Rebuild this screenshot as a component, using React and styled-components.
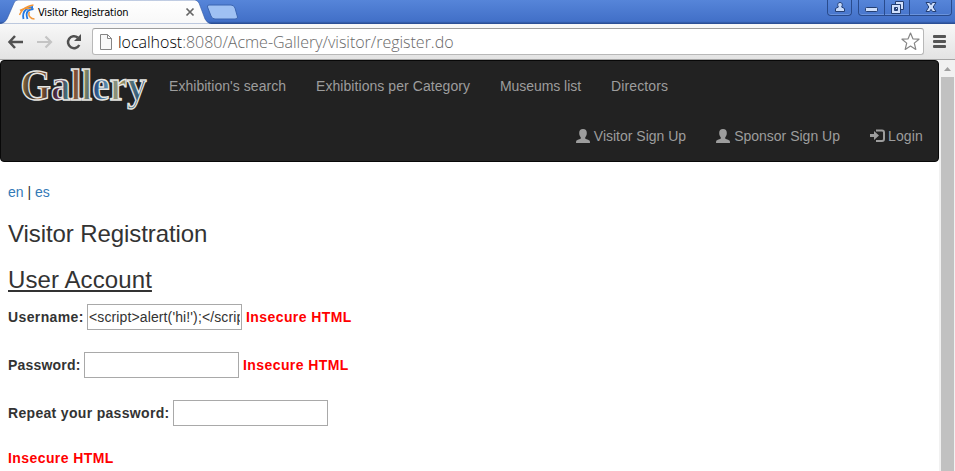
import React from "react";
import styled, { createGlobalStyle } from "styled-components";

const GlobalStyle = createGlobalStyle`
  * { box-sizing: border-box; }
  html, body { margin: 0; height: 100%; overflow: hidden; background: #fff; }
`;

const Window = styled.div`
  width: 955px;
  height: 471px;
  display: flex;
  flex-direction: column;
  overflow: hidden;
  font-family: "Liberation Sans", Arial, sans-serif;
  font-size: 14px;
  line-height: 20px;
  color: #333;
`;

const TitleBar = styled.header`
  height: 24px;
  flex: none;
  display: flex;
  align-items: flex-start;
  background: linear-gradient(#5685d9 0, #4270c8 21px, #3c69bd 22px, #2b4f96 23px, #2b4f96 24px);
`;

const Tab = styled.div`
  position: relative;
  width: 209px;
  height: 24px;
  display: flex;
  align-items: center;
  padding: 0 14px 0 19px;
`;

const TabShape = styled.svg`
  position: absolute;
  left: 0;
  top: 0;
`;

const Favicon = styled.svg`
  position: relative;
  flex: none;
`;

const TabTitle = styled.span`
  position: relative;
  flex: 1;
  margin: 1px 0 0 3px;
  font: 11px/16px "DejaVu Sans Condensed", "DejaVu Sans", sans-serif;
  letter-spacing: -0.18px;
  color: #000;
  white-space: nowrap;
`;

const TabClose = styled.svg`
  position: relative;
  flex: none;
`;

const NewTab = styled.svg`
  margin: 4px 0 0 -3px;
`;

const Controls = styled.div`
  display: flex;
  gap: 6px;
  margin-left: auto;
  padding-right: 3px;
`;

const ControlGroup = styled.div`
  display: flex;
  height: 16px;
  border: 1px solid #294b8d;
  border-top: 0;
  border-radius: 0 0 4px 4px;
  box-shadow: inset 0 -1px #6a93dc;
`;

const ControlButton = styled.div`
  width: ${(p) => p.$width}px;
  height: 15px;
  display: flex;
  justify-content: center;
  & + & { border-left: 1px solid #294b8d; }
`;

const Toolbar = styled.div`
  height: 36px;
  flex: none;
  display: flex;
  align-items: center;
  padding: 0 8px 0 7px;
  background: linear-gradient(#f8f8f8, #e3e3e3);
  border-bottom: 1px solid #a5a5a5;
`;

const NavIcons = styled.div`
  display: flex;
  gap: 11px;
  width: 85px;
`;

const AddressBar = styled.div`
  width: 832px;
  height: 27px;
  display: flex;
  align-items: center;
  padding: 0 3px 0 7px;
  background: #fff;
  border: 1px solid #b8b8b8;
  border-top-color: #9d9d9d;
  border-radius: 3px;
`;

const Url = styled.span`
  flex: 1;
  margin-left: 6px;
  font: 300 16px/24px "Open Sans", "Noto Sans", sans-serif;
  letter-spacing: -0.02px;
  color: #686868;
  white-space: nowrap;
`;

const UrlHost = styled.span`
  color: #000;
`;

const MenuIcon = styled.svg`
  margin-left: auto;
`;

const Viewport = styled.div`
  flex: 1;
  display: flex;
  min-height: 0;
`;

const Page = styled.main`
  flex: 1;
  min-width: 0;
  overflow: hidden;
`;

const Navbar = styled.nav`
  height: 102px;
  background: #222;
  border: 1px solid #080808;
  border-radius: 4px;
  color: #9d9d9d;
`;

const NavRow = styled.div`
  height: 50px;
  display: flex;
  align-items: center;
  justify-content: ${(p) => (p.$end ? "flex-end" : "flex-start")};
  gap: 30px;
  padding: 0 15px 0 ${(p) => (p.$end ? 0 : 15)}px;
`;

const Logo = styled.svg`
  margin-right: -10px;
  overflow: visible;
`;

const NavLink = styled.a`
  display: flex;
  align-items: center;
  gap: ${(p) => p.$gap ?? 4}px;
  letter-spacing: ${(p) => p.$spacing || 0}px;
  white-space: nowrap;
`;

const Content = styled.div`
  padding: 20px 8px 0;
`;

const LanguageLink = styled.a`
  color: #337ab7;
`;

const Title = styled.h1`
  margin: ${(p) => (p.$underlined ? 20 : 19)}px 0 0;
  font-size: 24px;
  font-weight: 400;
  line-height: 26px;
  letter-spacing: ${(p) => p.$spacing || 0}px;
  text-decoration: ${(p) => (p.$underlined ? "underline" : "none")};
  text-underline-offset: 2px;
  text-decoration-thickness: 2px;
`;

const Field = styled.div`
  display: flex;
  align-items: center;
  gap: 4px;
  height: 26px;
  margin-bottom: 22px;
`;

const Label = styled.label`
  width: ${(p) => p.$width}px;
  font-weight: 700;
  letter-spacing: ${(p) => p.$spacing || 0}px;
  white-space: nowrap;
`;

const Form = styled.form`
  margin-top: 11px;
`;

const Input = styled.input`
  width: 155px;
  height: 26px;
  padding: 1px 1px;
  border: 1px solid #a9a9a9;
  border-radius: 0;
  outline: 0;
  background: #fff;
  color: #333;
  font: 14px/20px "Liberation Sans", Arial, sans-serif;
  letter-spacing: 0.12px;
`;

const ErrorText = styled.span`
  font-weight: 700;
  letter-spacing: 0.42px;
  color: #f00;
`;

const Scrollbar = styled.div`
  width: 16px;
  display: flex;
  flex-direction: column;
  align-items: center;
  padding-left: 1px;
  background: #f1f1f1;
`;

const ScrollArrow = styled.svg`
  flex: none;
`;

const ScrollThumb = styled.div`
  width: 13px;
  flex: 1;
  background: #c1c1c1;
`;

const UserIcon = () => (
  <svg width="14" height="14" viewBox="0 0 14 14" fill="#9d9d9d">
    <path d="M7 0C9.6 0 10.8 1.6 10.8 4C10.8 6 10.1 7.5 9.2 8.4V9.5C9.6 10.3 13.2 10.7 13.8 12.1L14 14H0L.2 12.1C.8 10.7 4.4 10.3 4.8 9.5V8.4C3.9 7.5 3.2 6 3.2 4C3.2 1.6 4.4 0 7 0Z" />
  </svg>
);

const LoginIcon = () => (
  <svg width="15" height="14" viewBox="0 0 15 14">
    <path d="M0 5H4V2L9 6.5L4 11V8H0Z" fill="#9d9d9d" />
    <path d="M6 1.5H12Q14 1.5 14 3.5V10Q14 12 12 12H6" fill="none" stroke="#9d9d9d" strokeWidth="2" />
  </svg>
);

const LINKS = [
  ["Exhibition's search", 0.04],
  ["Exhibitions per Category", 0.06],
  ["Museums list", -0.06],
  ["Directors", 0.12],
];

export default function App() {
  return (
    <Window>
      <GlobalStyle />
      <TitleBar>
        <Tab>
          <TabShape width="215" height="24">
            <defs>
              <linearGradient id="tab" x2="0" y2="1">
                <stop stopColor="#fff" />
                <stop offset="1" stopColor="#f8f8f8" />
              </linearGradient>
            </defs>
            <path d="M0 24Q5 23 7 19L14 3Q15 0 18 0H195Q197 0 199 3L205 19Q207 23 211 24Z" fill="url(#tab)" stroke="#3157a3" strokeWidth=".6" />
          </TabShape>
          <Favicon width="16" height="16" viewBox="0 0 16 16" fill="none">
            <path d="M4.5 15Q3 9 7 5.5Q10 3 14 3M8.5 15Q6.5 9.5 9 7Q11 5 14.5 5" stroke="#2478df" strokeWidth="1.8" />
            <path d="M.5 11Q3 5 8 3Q11 1.5 14.5 1M1 6.5Q6 3.5 12 4.5M10.5 8Q9 10.5 11 13Q12.5 15 15.5 15" stroke="#f39739" strokeWidth="1.5" />
          </Favicon>
          <TabTitle>Visitor Registration</TabTitle>
          <TabClose width="10" height="10" viewBox="0 0 10 10">
            <path d="M1.5 1.5L8.5 8.5M8.5 1.5L1.5 8.5" stroke="#666" strokeWidth="1.7" />
          </TabClose>
        </Tab>
        <NewTab width="33" height="16" viewBox="0 0 33 16">
          <path d="M3 1H25Q28 1 29 4L31.5 13Q32 15 29 15H9Q6 15 5 12L1.5 3Q1 1 3 1Z" fill="#9fc1f3" stroke="#3b65b1" />
        </NewTab>
        <Controls>
          <ControlGroup>
            <ControlButton $width={23}>
              <svg width="12" height="13" viewBox="0 0 12 13" fill="#c8dbfb" stroke="#243f73">
                <path d="M6 2.5C9 2.5 8.5 6 7.5 7L10.5 8.5V11.5H1.5V8.5L4.5 7C3.5 6 3 2.5 6 2.5Z" />
              </svg>
            </ControlButton>
          </ControlGroup>
          <ControlGroup>
            <ControlButton $width={25}>
              <svg width="13" height="14"><rect x=".5" y="7.5" width="12" height="4" rx="1" fill="#d0e0fc" stroke="#243f73" /></svg>
            </ControlButton>
            <ControlButton $width={25}>
              <svg width="13" height="14" viewBox="0 0 13 14" fill="#d0e0fc" stroke="#243f73">
                <path d="M4.5 1.5H12.5V9.5H4.5Z" />
                <path d="M.5 4.5H9.5V13.5H.5ZM3.5 7.5V10.5H6.5V7.5Z" fillRule="evenodd" />
              </svg>
            </ControlButton>
            <ControlButton $width={42}>
              <svg width="12" height="14" viewBox="0 0 12 14">
                <path d="M1 2.5H4.5L6 4.7L7.5 2.5H11L8.2 7L11 11.5H7.5L6 9.3L4.5 11.5H1L3.8 7Z" fill="#d0e0fc" stroke="#243f73" />
              </svg>
            </ControlButton>
          </ControlGroup>
        </Controls>
      </TitleBar>

      <Toolbar>
        <NavIcons>
          <svg width="18" height="18" viewBox="0 0 18 18" fill="none" stroke="#505050" strokeWidth="2.5"><path d="M16 9H3M8 3L2.5 9L8 15" /></svg>
          <svg width="18" height="18" viewBox="0 0 18 18" fill="none" stroke="#c4c4c4" strokeWidth="2.2"><path d="M1 9H15M9.5 3.5L15 9L9.5 14.5" /></svg>
          <svg width="18" height="18" viewBox="0 0 18 18"><path d="M14.3 12A6 6 0 1 1 12.8 4.5" fill="none" stroke="#505050" strokeWidth="2.5" /><path d="M16 1V8H9Z" fill="#505050" /></svg>
        </NavIcons>
        <AddressBar>
          <svg width="12" height="16" viewBox="0 0 12 16" fill="#f8f8f8" stroke="#858585"><path d="M.5.5H7.5L11.5 4.5V15.5H.5ZM7.5.5V4.5H11.5" /></svg>
          <Url><UrlHost>localhost</UrlHost>:8080/Acme-Gallery/visitor/register.do</Url>
          <svg width="19" height="19" viewBox="0 0 19 19"><path d="M9.5 1L11.9 6.8L18 7.2L13.3 11.1L14.8 17.4L9.5 14L4.2 17.4L5.7 11.1L1 7.2L7.1 6.8Z" fill="#fff" stroke="#858585" strokeWidth="1.2" strokeLinejoin="round" /></svg>
        </AddressBar>
        <MenuIcon width="14" height="14" fill="#555"><rect y="0" width="13" height="3" rx="1" /><rect y="5" width="13" height="3" rx="1" /><rect y="10" width="13" height="3" rx="1" /></MenuIcon>
      </Toolbar>

      <Viewport>
        <Page>
          <Navbar>
            <NavRow>
              <Logo width="133" height="50" viewBox="0 0 133 50">
                <defs>
                  <linearGradient id="paint" gradientUnits="userSpaceOnUse" x1="5" y1="0" x2="131" y2="9">
                    <stop stopColor="#b07a3c" />
                    <stop offset=".1" stopColor="#2a3031" />
                    <stop offset=".16" stopColor="#a0602f" />
                    <stop offset=".26" stopColor="#20222c" />
                    <stop offset=".32" stopColor="#6b3055" />
                    <stop offset=".38" stopColor="#3b7178" />
                    <stop offset=".43" stopColor="#7c4432" />
                    <stop offset=".51" stopColor="#8b8a58" />
                    <stop offset=".6" stopColor="#244f86" />
                    <stop offset=".7" stopColor="#5b8fb0" />
                    <stop offset=".8" stopColor="#a39258" />
                    <stop offset=".9" stopColor="#44697c" />
                    <stop offset="1" stopColor="#2b4d78" />
                  </linearGradient>
                </defs>
                <text x="4.5" y="39" textLength="126" lengthAdjust="spacingAndGlyphs" fontFamily="Liberation Serif, serif" fontSize="44" fontWeight="700" fill="url(#paint)" stroke="#e7e7e4" strokeWidth="1.4">Gallery</text>
              </Logo>
              {LINKS.map(([label, spacing]) => <NavLink key={label} $spacing={spacing}>{label}</NavLink>)}
            </NavRow>
            <NavRow $end>
              <NavLink><UserIcon />Visitor Sign Up</NavLink>
              <NavLink><UserIcon />Sponsor Sign Up</NavLink>
              <NavLink $gap={3} $spacing={0.15}><LoginIcon />Login</NavLink>
            </NavRow>
          </Navbar>
          <Content>
            <div><LanguageLink>en</LanguageLink> | <LanguageLink>es</LanguageLink></div>
            <Title $spacing={-0.08}>Visitor Registration</Title>
            <Title as="h2" $underlined $spacing={0.1}>User Account</Title>
            <Form>
              <Field><Label $width={75} $spacing={0.38}>Username:</Label><Input defaultValue="<script>alert('hi!');</script>" /><ErrorText>Insecure HTML</ErrorText></Field>
              <Field><Label $width={72} $spacing={0.2}>Password:</Label><Input type="password" /><ErrorText>Insecure HTML</ErrorText></Field>
              <Field><Label $width={161} $spacing={0.32}>Repeat your password:</Label><Input type="password" /></Field>
              <ErrorText>Insecure HTML</ErrorText>
            </Form>
          </Content>
        </Page>
        <Scrollbar>
          <ScrollArrow width="13" height="17"><path d="M3 11L6.5 7L10 11Z" fill="#a0a0a0" /></ScrollArrow>
          <ScrollThumb />
        </Scrollbar>
      </Viewport>
    </Window>
  );
}
